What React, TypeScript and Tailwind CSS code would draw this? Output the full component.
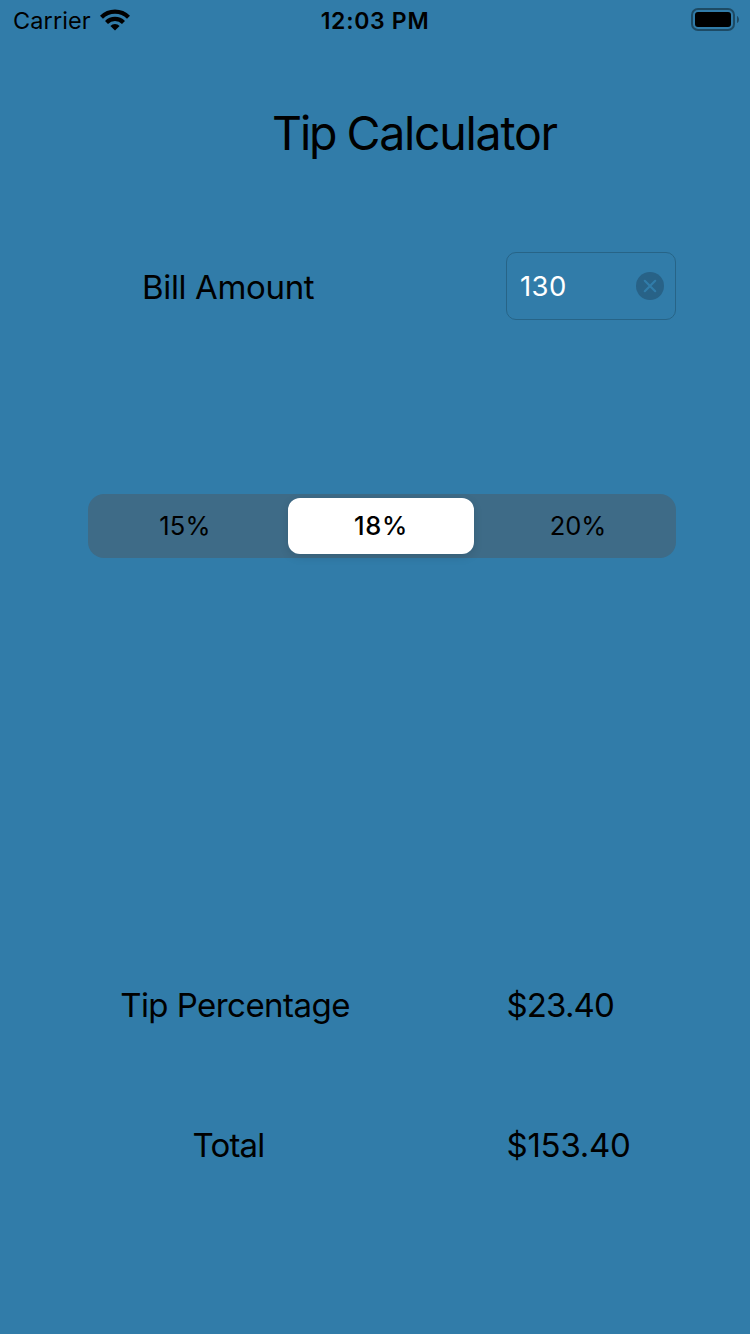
import React from "react";

function StatusBar() {
  return (
    <header className="flex h-10 items-center justify-between pl-[13px] pr-[11px] text-[24px] leading-10">
      <div className="flex w-[250px] items-center gap-[10px]">
        <span className="relative top-px w-[77px] text-[23.5px] tracking-[0.1px]">Carrier</span>
        <svg width="30" height="22" viewBox="0 0 30 22" fill="none" stroke="#000" strokeWidth="4.2">
          <path d="M1.5 8.3a19 19 0 0 1 27 0" />
          <path d="M6.5 13.4a12 12 0 0 1 17 0" />
          <path d="M15 21.5l-4.6-4.6a6.5 6.5 0 0 1 9.2 0Z" fill="#000" stroke="none" />
        </svg>
      </div>
      <span className="relative top-px -left-px text-[23px] font-semibold tracking-[0.7px]">12:03 PM</span>
      <div className="flex w-[250px] justify-end">
        <svg width="48" height="24" viewBox="0 0 48 24">
          <rect x="1" y="1" width="42" height="21" rx="6" fill="none" stroke="#1d4a64" strokeWidth="2" />
          <rect x="4" y="4" width="36" height="15" rx="3" />
          <path d="M46 8c2.6 1 2.6 6 0 7Z" fill="#1d4a64" />
        </svg>
      </div>
    </header>
  );
}

type ResultRowProps = { label: string; value: string; labelClass: string; valueClass: string };

function ResultRow({ label, value, labelClass, valueClass }: ResultRowProps) {
  return (
    <div className="flex h-[60px] items-center text-[33px]">
      <span className={`ml-[88px] text-center ${labelClass}`}>{label}</span>
      <span className={valueClass}>{value}</span>
    </div>
  );
}

export default function App() {
  return (
    <main className="flex h-[1334px] w-[750px] flex-col bg-[#317ca9] font-['Inter',sans-serif] text-black">
      <StatusBar />
      <h1 className="mt-[63px] pl-[272px] text-[46.5px] leading-[60px] tracking-[-1.25px]">
        <span className="tracking-[-2.1px]">Tip </span>Calculator
      </h1>
      <div className="mt-[89px] flex h-[68px] items-center pl-[142px] pr-[74px]">
        <span className="w-[364px] pt-1 text-[33px] tracking-[-0.35px]">Bill Amount</span>
        <div className="flex h-[68px] w-[170px] items-center justify-between rounded-[10px] border border-[#276487] pl-[13px] pr-[11px]">
          <span className="pt-0.5 text-[27.5px] tracking-[0.4px] text-white">130</span>
          <svg width="28" height="28" viewBox="0 0 28 28">
            <circle cx="14" cy="14" r="14" fill="#286287" />
            <path d="M8.8 8.8l10.4 10.4M19.2 8.8L8.8 19.2" stroke="#317ca9" strokeWidth="2.2" strokeLinecap="round" />
          </svg>
        </div>
      </div>
      <div className="ml-[88px] mt-[174px] flex h-16 w-[588px] items-center justify-between rounded-[16px] bg-[#3e6b87] text-[25.5px]">
        <button className="w-[194px] font-normal tracking-[0.2px]">15%</button>
        <button className="h-14 w-[186px] rounded-[12px] bg-white font-medium tracking-[0.6px] shadow-[0_3px_10px_rgba(0,0,0,0.12)]">
          18%
        </button>
        <button className="w-[196px] font-normal tracking-[-0.1px]">20%</button>
      </div>
      <div className="mt-[418px] flex flex-col gap-20">
        <ResultRow
          label="Tip Percentage"
          value="$23.40"
          labelClass="w-[294px] tracking-[-0.55px]"
          valueClass="ml-[124.5px] tracking-[-0.85px]"
        />
        <ResultRow
          label="Total"
          value="$153.40"
          labelClass="w-[281px] tracking-[-0.8px]"
          valueClass="ml-[137.5px] tracking-[-0.25px]"
        />
      </div>
    </main>
  );
}
